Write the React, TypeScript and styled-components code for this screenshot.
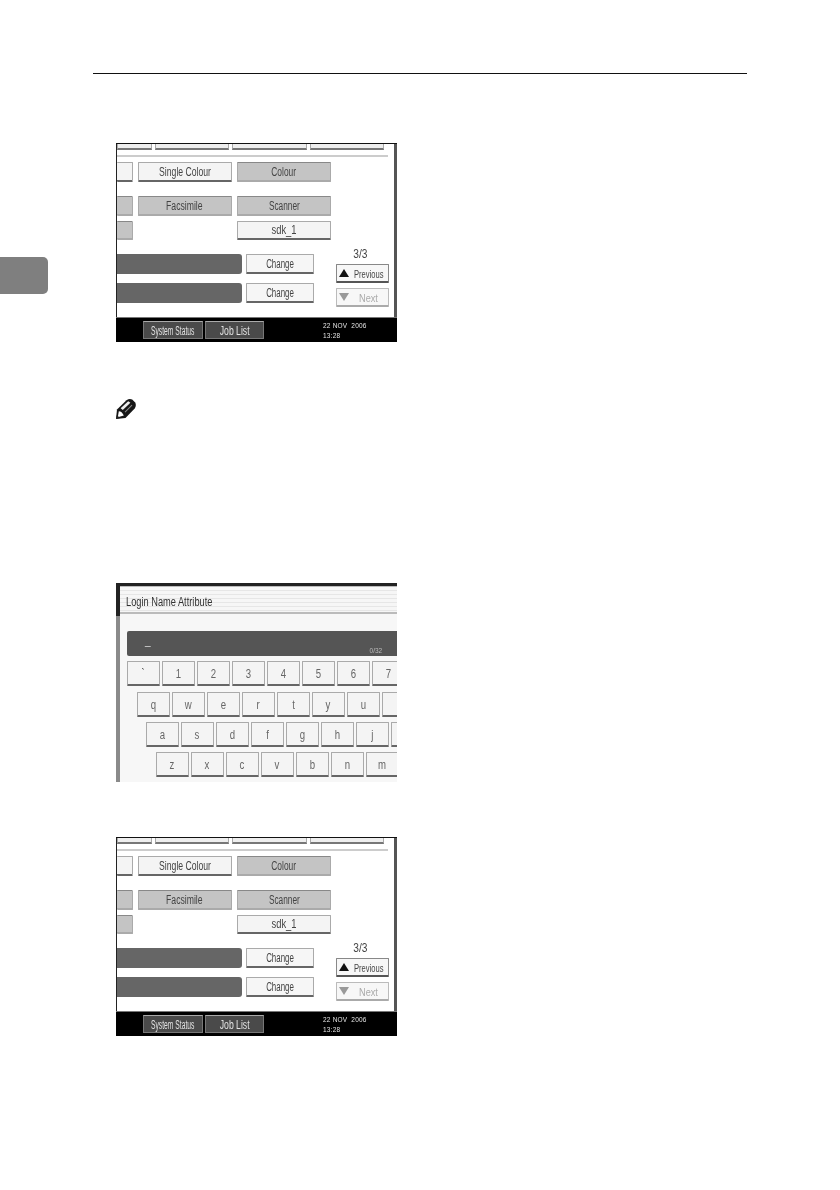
import React, { FC } from 'react'
import styled, { createGlobalStyle, css } from 'styled-components'

const GlobalStyle = createGlobalStyle`
  html, body {
    margin: 0;
    padding: 0;
    background: #fff;
  }
`

const Page = styled.div`
  display: grid;
  grid-template-columns: 48px 1fr;
  width: 840px;
  height: 1190px;
  background: #fff;
  font-family: "Liberation Sans", Arial, sans-serif;
`
const ChapterTab = styled.div`
  width: 48px;
  height: 37px;
  margin-top: 257px;
  border-radius: 0 5px 5px 0;
  background: #7f7f7f;
`
const Content = styled.main`
  display: flex;
  flex-direction: column;
  padding: 73px 0 0 45px;
`
const HeaderRule = styled.div`
  width: 654px;
  height: 1px;
  background: #111;
`
const Figure = styled.div<{ $top: number }>`
  margin: ${(p) => p.$top}px 0 0 23px;
`
const NoteIcon = styled.svg`
  display: block;
  width: 20px;
  height: 20px;
  margin: 57px 0 0 23px;
`

/* the panel font is tall and narrow, so labels get squeezed sideways */
const Label = styled.span<{ $sx?: number }>`
  display: inline-block;
  flex: none;
  padding-top: 1px;
  transform: scaleX(${(p) => p.$sx ?? 0.72});
  white-space: nowrap;
`
const FixedLabel = styled(Label)<{ $w: number }>`
  width: ${(p) => p.$w}px;
  transform-origin: left center;
`

/* device panel */
const Screen = styled.div`
  box-sizing: border-box;
  display: flex;
  flex-direction: column;
  width: 281px;
  height: 199px;
  overflow: hidden;
  background: #fff;
  border-top: 1px solid #111;
  color: #444;
  filter: blur(0.4px);
`
const ScreenBody = styled.div`
  flex: 1;
  min-height: 0;
  border-left: 1px solid #222;
  border-right: 3px solid #555;
`
const TabRow = styled.div`
  display: flex;
  gap: 3px;
  height: 6px;
`
const TopTab = styled.div<{ $w: number }>`
  flex: none;
  width: ${(p) => p.$w}px;
  background: #eee;
  border: 1px solid #aaa;
  border-top: none;
  border-bottom: 2px solid #777;
  box-sizing: border-box;
`
const Divider = styled.div`
  width: 271px;
  height: 2px;
  margin-top: 5px;
  background: #ccc;
`
const ChoiceRow = styled.div<{ $top: number }>`
  display: grid;
  grid-template-columns: 15.5px 93.5px 94px;
  gap: 5.5px;
  height: 19.5px;
  margin-top: ${(p) => p.$top}px;
`

const buttonBase = css`
  box-sizing: border-box;
  display: flex;
  align-items: center;
  justify-content: center;
  border: 1px solid #aaa;
  border-bottom: 2px solid #666;
  border-radius: 1px;
  font-size: 12px;
  white-space: nowrap;
`
const Choice = styled.div<{ $active?: boolean }>`
  ${buttonBase}
  background: ${(p) => (p.$active ? '#c4c4c4' : '#f4f4f4')};
  border-top-color: ${(p) => (p.$active ? '#888' : '#aaa')};
  border-bottom-color: ${(p) => (p.$active ? '#aaa' : '#666')};
`
const ChoiceStub = styled(Choice)`
  border-left: none;
`
const EmptyCell = styled.div``
const Lower = styled.div`
  display: flex;
  margin-top: 8px;
`
const Fields = styled.div`
  display: flex;
  flex-direction: column;
  gap: 9.5px;
  padding-top: 6px;
`
const FieldRow = styled.div`
  display: flex;
  gap: 4px;
  height: 19.5px;
`
const ValueBar = styled.div`
  width: 125px;
  background: #666;
  border-radius: 0 3px 3px 0;
`
const ChangeButton = styled.div`
  ${buttonBase}
  width: 68px;
  background: #f6f6f6;
`
const Pager = styled.div`
  display: flex;
  flex-direction: column;
  width: 53px;
  margin-left: 22px;
`
const PageCount = styled.div`
  display: flex;
  justify-content: center;
  height: 16px;
  margin-right: 5px;
  font-size: 12px;
  line-height: 11px;
`
const PagerButton = styled.div<{ $disabled?: boolean }>`
  ${buttonBase}
  height: 19px;
  margin-bottom: 5px;
  padding: 0 ${(p) => (p.$disabled ? 10 : 6)}px 0 2px;
  justify-content: space-between;
  font-size: 11.5px;
  background: #f7f7f7;
  border-color: ${(p) => (p.$disabled ? '#bbb' : '#888')};
  border-bottom-color: ${(p) => (p.$disabled ? '#aaa' : '#555')};
  color: ${(p) => (p.$disabled ? '#aaa' : '#444')};
`
const Arrow = styled.span<{ $down?: boolean; $disabled?: boolean }>`
  flex: none;
  width: 0;
  height: 0;
  border-left: 5px solid transparent;
  border-right: 5px solid transparent;
  ${(p) =>
    p.$down
      ? `border-top: 8px solid ${p.$disabled ? '#999' : '#111'};`
      : `border-bottom: 8px solid ${p.$disabled ? '#999' : '#111'};`}
`
const StatusBar = styled.div`
  flex: none;
  box-sizing: border-box;
  display: flex;
  align-items: flex-start;
  gap: 2px;
  height: 25px;
  padding: 3px 0 0 27px;
  background: #000;
  border-top: 1px solid #777;
`
const StatusButton = styled.div`
  box-sizing: border-box;
  display: flex;
  align-items: center;
  justify-content: center;
  height: 18px;
  background: #4a4a4a;
  border: 1px solid #777;
  border-top-color: #aaa;
  color: #e2e2e2;
  font-size: 12px;
  white-space: nowrap;
`
const SystemButton = styled(StatusButton)`
  width: 60px;
`
const JobButton = styled(StatusButton)`
  width: 59px;
`
const Clock = styled.div`
  margin: 0 0 0 57px;
  color: #e4e4e4;
  font-size: 6.5px;
  line-height: 10px;
  letter-spacing: 0.2px;
  white-space: pre;
`

/* keyboard panel */
const KeyboardScreen = styled(Screen)`
  flex-direction: row;
  border-top: 3px solid #222;
`
const Rail = styled.div`
  flex: none;
  width: 4px;
  background: linear-gradient(#222 0 30px, #8a8a8a 30px);
`
const KeyboardBody = styled.div`
  flex: 1;
  min-width: 0;
  background: #f7f7f7;
`
const TitleBar = styled.div`
  box-sizing: border-box;
  display: flex;
  align-items: center;
  height: 28px;
  padding: 4px 0 0 6px;
  background: repeating-linear-gradient(#f6f6f6 0 3px, #e6e6e6 3px 4px);
  border-top: 1px solid #bbb;
  border-bottom: 2px solid #bbb;
  color: #333;
  font-size: 12.5px;
  white-space: nowrap;
`
const InputBar = styled.div`
  box-sizing: border-box;
  display: flex;
  height: 25px;
  margin: 17px 0 0 7px;
  padding: 6px 0 0 18px;
  background: #555;
  border-radius: 2px 0 0 2px;
  color: #e4e4e4;
  font-size: 10px;
  line-height: 10px;
`
const Counter = styled.span`
  margin-left: 219px;
  padding-top: 10px;
  color: #bbb;
  font-size: 6.5px;
  line-height: 8px;
`
const KeyRow = styled.div<{ $indent: number; $top: number }>`
  display: flex;
  gap: 2.5px;
  height: 25px;
  margin-top: ${(p) => p.$top}px;
  padding-left: ${(p) => p.$indent}px;
`
const Key = styled.div`
  ${buttonBase}
  flex: none;
  width: 32.5px;
  background: #f4f4f4;
  color: #666;
`

const PencilIcon: FC = () => (
  <NoteIcon viewBox="0 0 20 20" aria-hidden="true">
    <path d="M0 20 L1 10.5 L10.5 1.2 Q13.5 -0.7 16.2 0.6 L19.2 3.6 Q20.7 6.5 18.7 9.5 L9.5 19 Z" fill="#161616" />
    <path d="M4.6 9.2 L12.2 2.2 L14.4 3.8 L6.8 11 Z" fill="#efefef" />
    <path d="M8.6 12.8 L15.6 5.8 L16.4 6.6 L9.4 13.6 Z" fill="#8a8a8a" />
    <path d="M1.8 18.2 L2.8 12.2 Q5.8 12.2 7.8 16.6 Z" fill="#fff" />
    <path d="M0 20 L0.8 16 L4 19 Z" fill="#222" />
  </NoteIcon>
)

const StatusScreen: FC = () => (
  <Screen>
    <ScreenBody>
      <TabRow>
        <TopTab $w={35} />
        <TopTab $w={74} />
        <TopTab $w={75} />
        <TopTab $w={74} />
      </TabRow>
      <Divider />
      <ChoiceRow $top={5}>
        <ChoiceStub />
        <Choice><Label>Single Colour</Label></Choice>
        <Choice $active><Label $sx={0.7}>Colour</Label></Choice>
      </ChoiceRow>
      <ChoiceRow $top={14.5}>
        <ChoiceStub $active />
        <Choice $active><Label>Facsimile</Label></Choice>
        <Choice $active><Label $sx={0.69}>Scanner</Label></Choice>
      </ChoiceRow>
      <ChoiceRow $top={5}>
        <ChoiceStub $active />
        <EmptyCell />
        <Choice><Label $sx={0.78}>sdk_1</Label></Choice>
      </ChoiceRow>
      <Lower>
        <Fields>
          <FieldRow>
            <ValueBar />
            <ChangeButton><Label $sx={0.66}>Change</Label></ChangeButton>
          </FieldRow>
          <FieldRow>
            <ValueBar />
            <ChangeButton><Label $sx={0.66}>Change</Label></ChangeButton>
          </FieldRow>
        </Fields>
        <Pager>
          <PageCount><Label $sx={0.85}>3/3</Label></PageCount>
          <PagerButton>
            <Arrow />
            <FixedLabel $w={28} $sx={0.66}>Previous</FixedLabel>
          </PagerButton>
          <PagerButton $disabled>
            <Arrow $down $disabled />
            <FixedLabel $w={19} $sx={0.8}>Next</FixedLabel>
          </PagerButton>
        </Pager>
      </Lower>
    </ScreenBody>
    <StatusBar>
      <SystemButton><Label $sx={0.56}>System Status</Label></SystemButton>
      <JobButton><Label>Job List</Label></JobButton>
      <Clock>{'22 NOV  2006\n13:28'}</Clock>
    </StatusBar>
  </Screen>
)

const keyRows = [
  { indent: 7, top: 5, keys: ['`', '1', '2', '3', '4', '5', '6', '7'] },
  { indent: 17, top: 6, keys: ['q', 'w', 'e', 'r', 't', 'y', 'u', ''] },
  { indent: 26, top: 5, keys: ['a', 's', 'd', 'f', 'g', 'h', 'j', ''] },
  { indent: 36, top: 5, keys: ['z', 'x', 'c', 'v', 'b', 'n', 'm'] },
]

const LoginNameScreen: FC = () => (
  <KeyboardScreen>
    <Rail />
    <KeyboardBody>
      <TitleBar>
        <FixedLabel $w={85} $sx={0.74}>Login Name Attribute</FixedLabel>
      </TitleBar>
      <InputBar>
        _<Counter>0/32</Counter>
      </InputBar>
      {keyRows.map((row) => (
        <KeyRow key={row.indent} $indent={row.indent} $top={row.top}>
          {row.keys.map((k, i) => (
            <Key key={i}><Label $sx={0.8}>{k}</Label></Key>
          ))}
        </KeyRow>
      ))}
    </KeyboardBody>
  </KeyboardScreen>
)

const App: FC = () => (
  <Page>
    <GlobalStyle />
    <ChapterTab />
    <Content>
      <HeaderRule />
      <Figure $top={69}>
        <StatusScreen />
      </Figure>
      <PencilIcon />
      <Figure $top={164}>
        <LoginNameScreen />
      </Figure>
      <Figure $top={55}>
        <StatusScreen />
      </Figure>
    </Content>
  </Page>
)

export default App
